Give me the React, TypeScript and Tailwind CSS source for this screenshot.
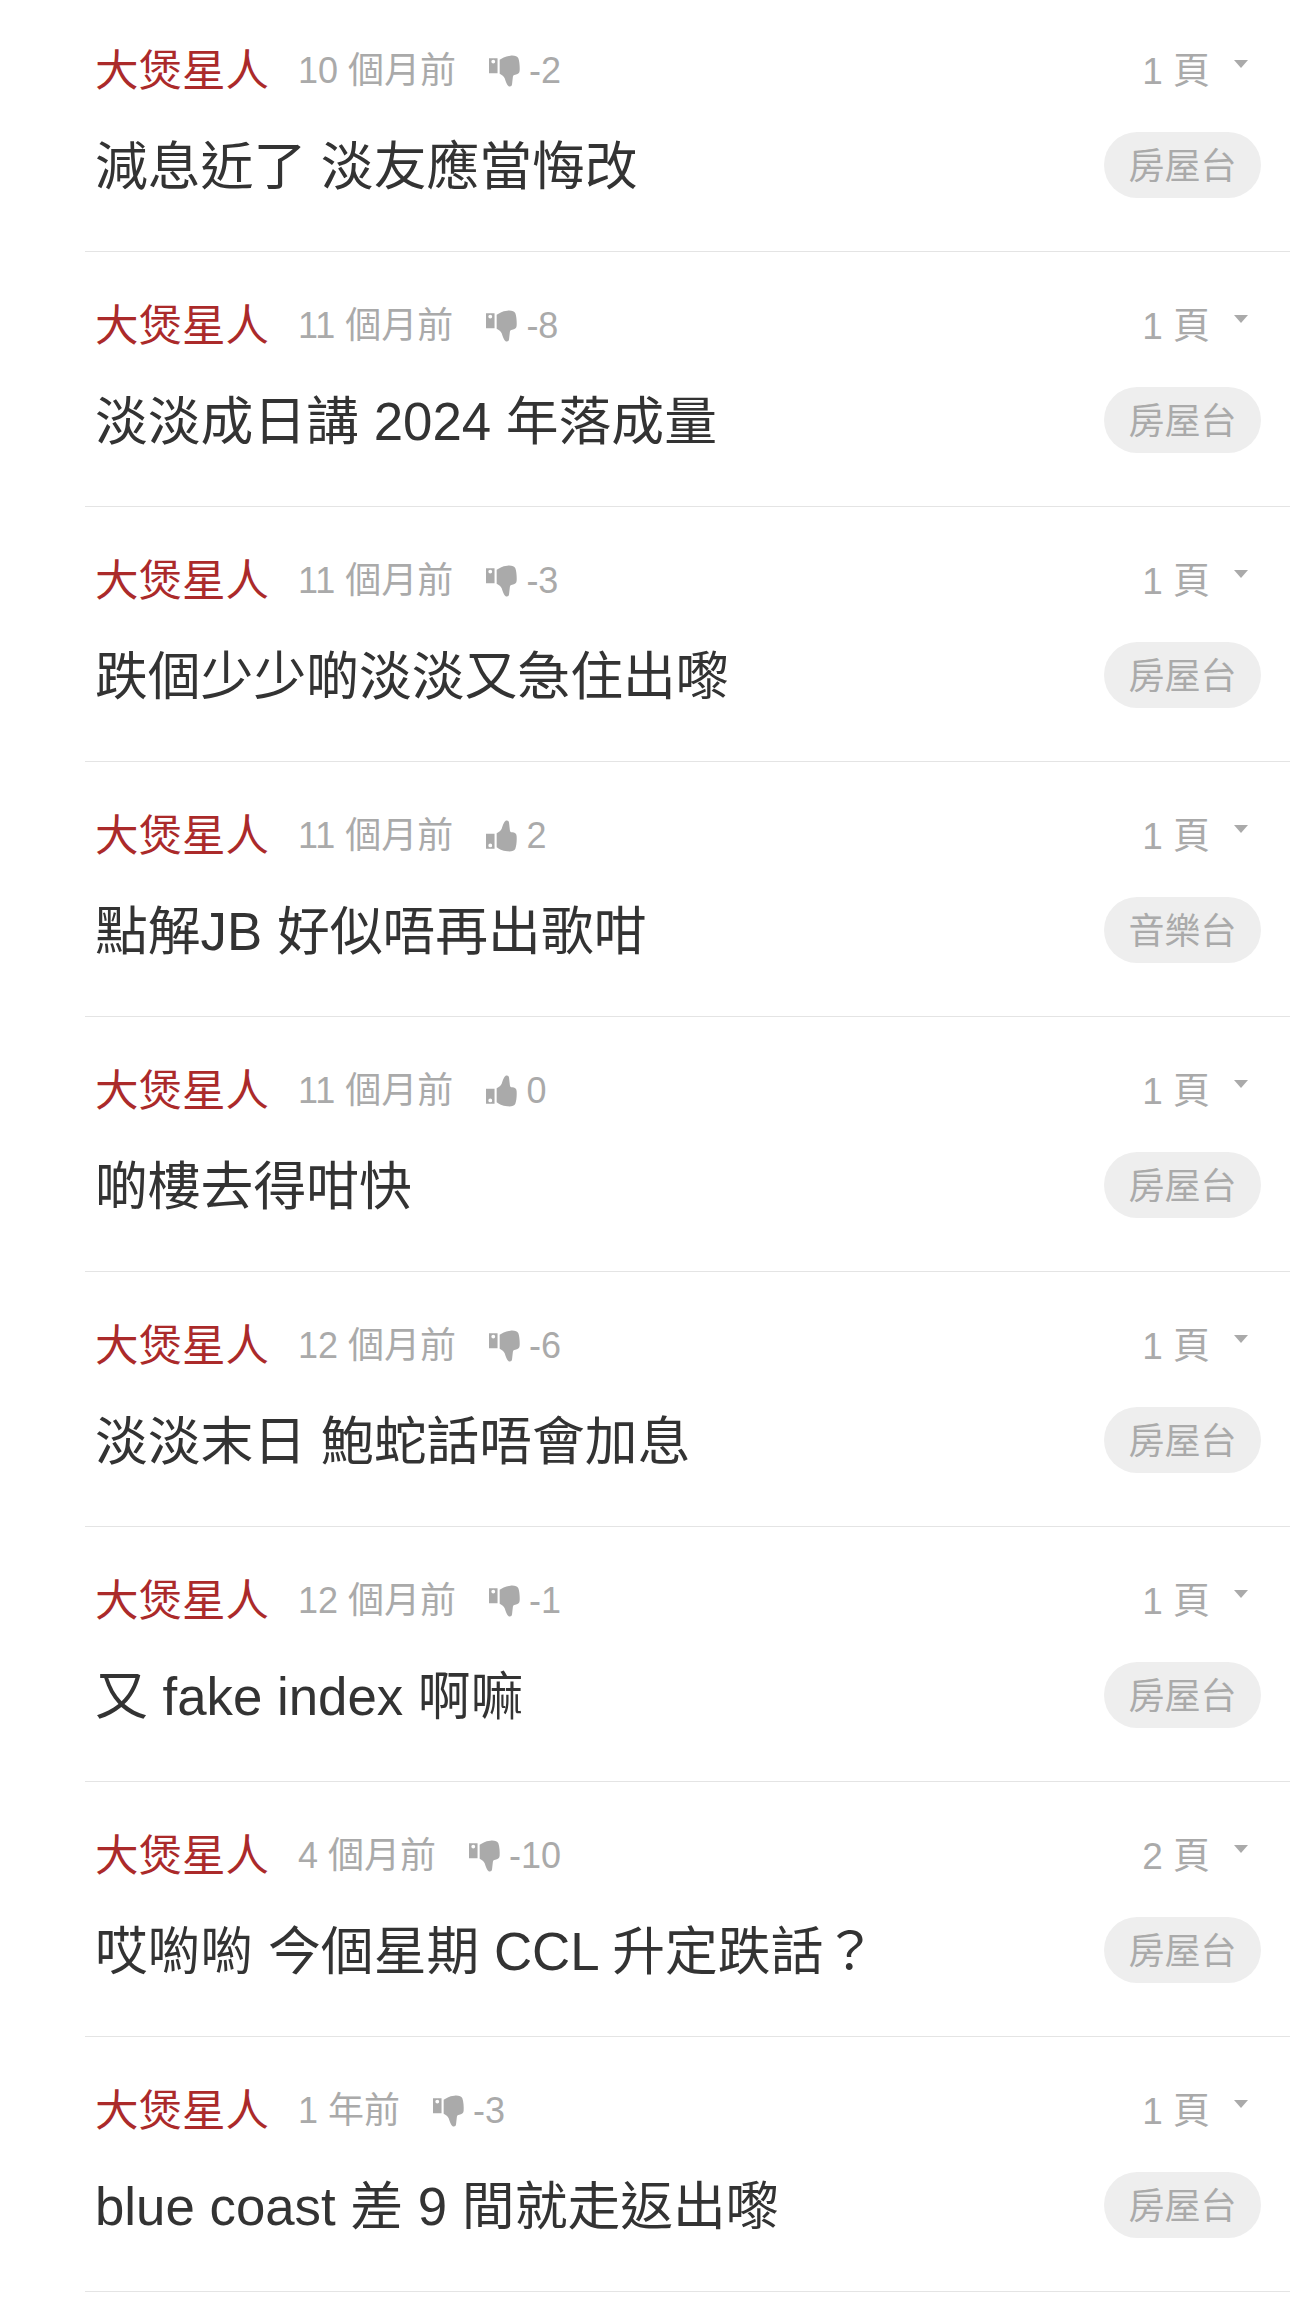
type Topic = {
  time: string
  score: number
  pages: number
  title: string
  tag: string
}

const topics: Topic[] = [
  { time: '10 個月前', score: -2, pages: 1, title: '減息近了 淡友應當悔改', tag: '房屋台' },
  { time: '11 個月前', score: -8, pages: 1, title: '淡淡成日講 2024 年落成量', tag: '房屋台' },
  { time: '11 個月前', score: -3, pages: 1, title: '跌個少少啲淡淡又急住出嚟', tag: '房屋台' },
  { time: '11 個月前', score: 2, pages: 1, title: '點解JB 好似唔再出歌咁', tag: '音樂台' },
  { time: '11 個月前', score: 0, pages: 1, title: '啲樓去得咁快', tag: '房屋台' },
  { time: '12 個月前', score: -6, pages: 1, title: '淡淡末日 鮑蛇話唔會加息', tag: '房屋台' },
  { time: '12 個月前', score: -1, pages: 1, title: '又 fake index 啊嘛', tag: '房屋台' },
  { time: '4 個月前', score: -10, pages: 2, title: '哎喲喲 今個星期 CCL 升定跌話？', tag: '房屋台' },
  { time: '1 年前', score: -3, pages: 1, title: 'blue coast 差 9 間就走返出嚟', tag: '房屋台' },
]

function ThumbIcon({ down }: { down: boolean }) {
  return (
    <svg
      viewBox="0 0 30 30"
      className={`w-[32px] h-[32px] mr-[8px] ${down ? '' : 'scale-y-[-1]'}`}
      fill="currentColor"
    >
      <path
        fillRule="evenodd"
        d="M0 3h8v14H0zM4 4.4a1.8 1.8 0 1 0 0 3.6a1.8 1.8 0 0 0 0-3.6z"
      />
      <path d="M10 4.5C12 3 15 1 20 0.6C24 0.3 26.5 1 27.5 3C28.6 6 29 11 28.7 15C28.5 17.2 27 18.2 24.5 18.4C23.4 18.5 22.6 19 22.4 20.5L21.6 27.5C21.4 29.6 19.6 30 18.4 29.2C16.8 28.2 15.6 24.5 14.8 22C14 20 12.2 18.6 10 17.6z" />
    </svg>
  )
}

function TopicRow({ topic }: { topic: Topic }) {
  return (
    <div className="border-b border-[#e4e4e4] pl-[10px] pr-[29px] pt-[48px] h-[255px]">
      <div className="flex items-center justify-between h-[50px]">
        <div className="flex items-center">
          <span className="mt-[2px] text-[43.5px] leading-[50px] text-[#ab2a2a]">大煲星人</span>
          <span className="ml-[29px] mt-[1px] text-[36px] leading-[50px] text-[#aaaaaa]">{topic.time}</span>
          <span className="ml-[33px] mt-[1px] flex items-center text-[36px] leading-[50px] text-[#aaaaaa]">
            <ThumbIcon down={topic.score < 0} />
            {topic.score}
          </span>
        </div>
        <div className="flex items-center">
          <span className="mt-[3px] text-[37px] leading-[50px] text-[#aaaaaa]">{topic.pages} 頁</span>
          <span className="ml-[24px] mr-[13px] mb-[12px] w-0 h-0 border-x-[7px] border-x-transparent border-t-[8px] border-t-[#aaaaaa]"></span>
        </div>
      </div>
      <div className="flex items-center justify-between h-[66px] mt-[37px]">
        <h2 className="mt-[3px] text-[52.8px] leading-[66px] font-normal text-[#333333]">{topic.title}</h2>
        <span className="flex items-center justify-center w-[157px] h-[66px] pt-[3px] rounded-full bg-[#eeeeee] text-[36px] text-[#aaaaaa]">
          {topic.tag}
        </span>
      </div>
    </div>
  )
}

export default function App() {
  return (
    <div className="h-[2306px] overflow-hidden bg-white font-['Liberation_Sans','Noto_Sans_CJK_TC',sans-serif]">
      <div className="ml-[85px] mt-[-3px]">
        {topics.map((topic, index) => (
          <TopicRow key={index} topic={topic} />
        ))}
      </div>
    </div>
  )
}
